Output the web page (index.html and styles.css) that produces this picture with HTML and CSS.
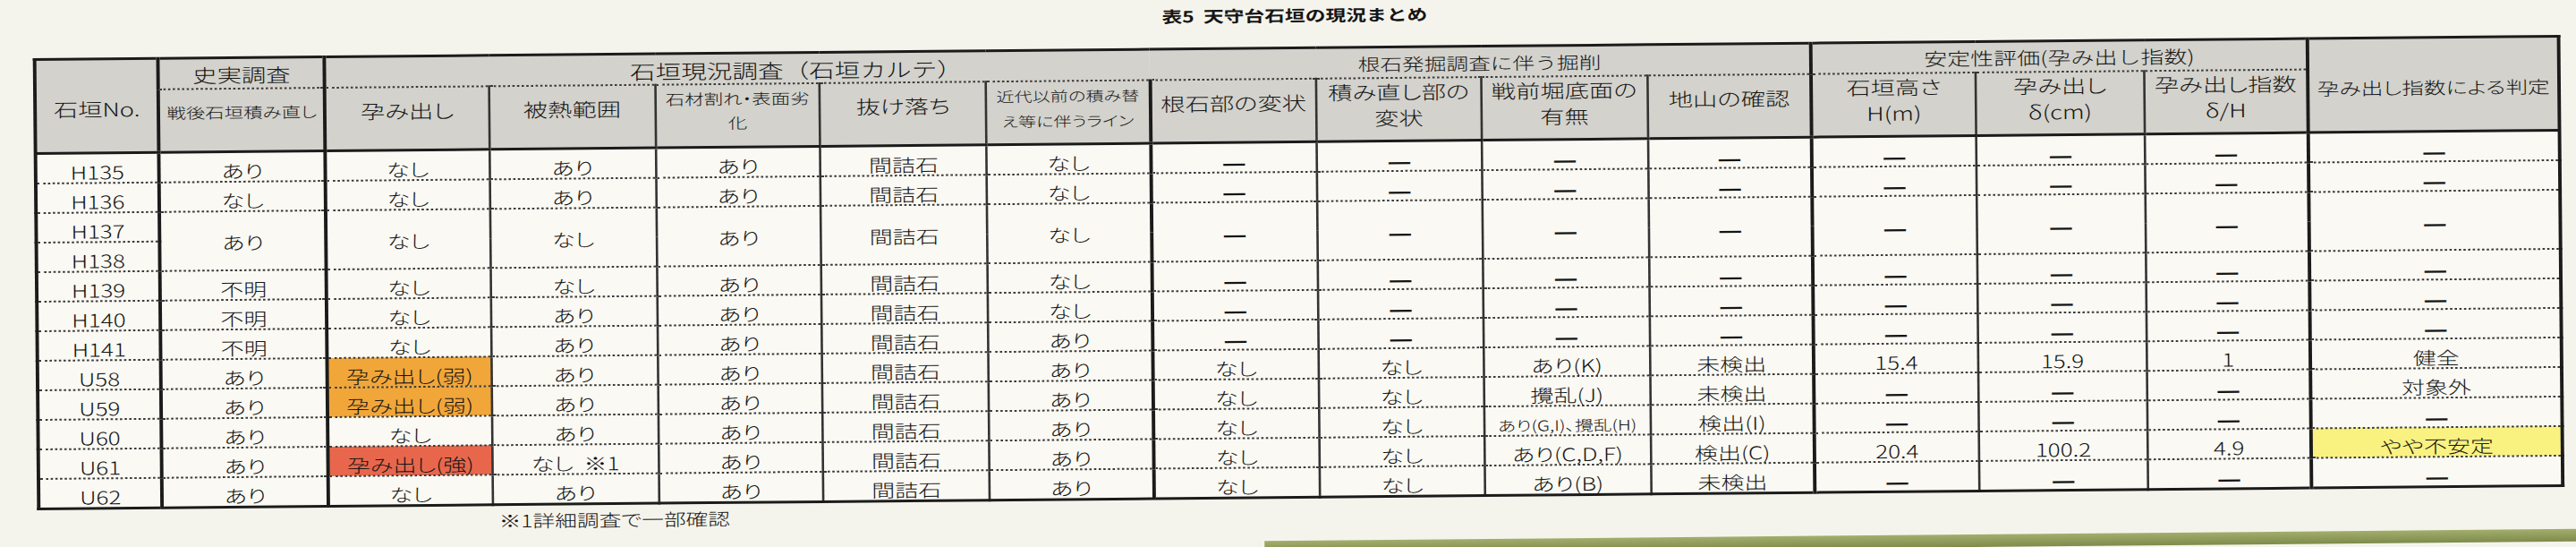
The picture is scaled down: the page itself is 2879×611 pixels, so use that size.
FILE: index.html
```html
<!DOCTYPE html>
<html lang="ja">
<head>
<meta charset="utf-8">
<title>表5 天守台石垣の現況まとめ</title>
<link rel="stylesheet" href="styles.css">
</head>
<body>
<div class="sheet">
  <div class="stretch">
    <div class="title-row"><h1 class="title">表5&nbsp;&nbsp;天守台石垣の現況まとめ</h1></div>
    <table class="summary">
      <colgroup>
        <col class="w-no">
        <col class="w-a">
        <col class="w-b">
        <col class="w-a">
        <col class="w-c">
        <col class="w-a">
        <col class="w-b">
        <col class="w-a">
        <col class="w-c">
        <col class="w-a">
        <col class="w-b">
        <col class="w-c">
        <col class="w-x">
        <col class="w-b">
        <col class="w-j">
      </colgroup>
      <thead>
        <tr class="hr1">
          <th rowspan="2" class="no">石垣No.</th>
          <th class="grp tl">史実調査</th>
          <th colspan="5" class="grp tl open-r shift">石垣現況調査（石垣カルテ）</th>
          <th colspan="4" class="grp open-l g-small">根石発掘調査に伴う掘削</th>
          <th colspan="3" class="grp tl g-mid">安定性評価(孕み出し指数)</th>
          <th rowspan="2" class="judge tl">孕み出し指数による判定</th>
        </tr>
        <tr class="hr2">
          <th class="tl sm">戦後石垣積み直し</th>
          <th class="tl">孕み出し</th>
          <th>被熱範囲</th>
          <th class="sm two">石材割れ・表面劣<br>化</th>
          <th>抜け落ち</th>
          <th class="xs two">近代以前の積み替<br>え等に伴うライン</th>
          <th class="tl">根石部の変状</th>
          <th class="two">積み直し部の<br>変状</th>
          <th class="two">戦前堀底面の<br>有無</th>
          <th>地山の確認</th>
          <th class="tl two">石垣高さ<br>H(m)</th>
          <th class="two">孕み出し<br>δ(cm)</th>
          <th class="two">孕み出し指数<br>δ/H</th>
        </tr>
      </thead>
      <tbody>
        <tr>
          <td>H135</td><td>あり</td><td>なし</td><td>あり</td><td>あり</td><td>間詰石</td><td>なし</td>
          <td class="d">—</td><td class="d">—</td><td class="d">—</td><td class="d">—</td><td class="d">—</td><td class="d">—</td><td class="d">—</td><td class="d">—</td>
        </tr>
        <tr>
          <td>H136</td><td>なし</td><td>なし</td><td>あり</td><td>あり</td><td>間詰石</td><td>なし</td>
          <td class="d">—</td><td class="d">—</td><td class="d">—</td><td class="d">—</td><td class="d">—</td><td class="d">—</td><td class="d">—</td><td class="d">—</td>
        </tr>
        <tr>
          <td>H137</td><td rowspan="2" class="mid">あり</td><td rowspan="2" class="mid">なし</td><td rowspan="2" class="mid">なし</td><td rowspan="2" class="mid">あり</td><td rowspan="2" class="mid">間詰石</td><td rowspan="2" class="mid">なし</td>
          <td rowspan="2" class="d mid">—</td><td rowspan="2" class="d mid">—</td><td rowspan="2" class="d mid">—</td><td rowspan="2" class="d mid">—</td><td rowspan="2" class="d mid">—</td><td rowspan="2" class="d mid">—</td><td rowspan="2" class="d mid">—</td><td rowspan="2" class="d mid">—</td>
        </tr>
        <tr>
          <td>H138</td>
        </tr>
        <tr>
          <td>H139</td><td>不明</td><td>なし</td><td>なし</td><td>あり</td><td>間詰石</td><td>なし</td>
          <td class="d">—</td><td class="d">—</td><td class="d">—</td><td class="d">—</td><td class="d">—</td><td class="d">—</td><td class="d">—</td><td class="d">—</td>
        </tr>
        <tr>
          <td>H140</td><td>不明</td><td>なし</td><td>あり</td><td>あり</td><td>間詰石</td><td>なし</td>
          <td class="d">—</td><td class="d">—</td><td class="d">—</td><td class="d">—</td><td class="d">—</td><td class="d">—</td><td class="d">—</td><td class="d">—</td>
        </tr>
        <tr>
          <td>H141</td><td>不明</td><td>なし</td><td>あり</td><td>あり</td><td>間詰石</td><td>あり</td>
          <td class="d">—</td><td class="d">—</td><td class="d">—</td><td class="d">—</td><td class="d">—</td><td class="d">—</td><td class="d">—</td><td class="d">—</td>
        </tr>
        <tr>
          <td>U58</td><td>あり</td><td class="weak">孕み出し(弱)</td><td>あり</td><td>あり</td><td>間詰石</td><td>あり</td>
          <td>なし</td><td>なし</td><td>あり(K)</td><td>未検出</td><td>15.4</td><td>15.9</td><td>1</td><td>健全</td>
        </tr>
        <tr>
          <td>U59</td><td>あり</td><td class="weak">孕み出し(弱)</td><td>あり</td><td>あり</td><td>間詰石</td><td>あり</td>
          <td>なし</td><td>なし</td><td>攪乱(J)</td><td>未検出</td><td class="d">—</td><td class="d">—</td><td class="d">—</td><td>対象外</td>
        </tr>
        <tr>
          <td>U60</td><td>あり</td><td>なし</td><td>あり</td><td>あり</td><td>間詰石</td><td>あり</td>
          <td>なし</td><td>なし</td><td class="tiny">あり(G,I)、攪乱(H)</td><td>検出(I)</td><td class="d">—</td><td class="d">—</td><td class="d">—</td><td class="d">—</td>
        </tr>
        <tr>
          <td>U61</td><td>あり</td><td class="strong">孕み出し(強)</td><td>なし&nbsp;&nbsp;※1</td><td>あり</td><td>間詰石</td><td>あり</td>
          <td>なし</td><td>なし</td><td>あり(C,D,F)</td><td>検出(C)</td><td>20.4</td><td>100.2</td><td>4.9</td><td class="caution">やや不安定</td>
        </tr>
        <tr>
          <td>U62</td><td>あり</td><td>なし</td><td>あり</td><td>あり</td><td>間詰石</td><td>あり</td>
          <td>なし</td><td>なし</td><td>あり(B)</td><td>未検出</td><td class="d">—</td><td class="d">—</td><td class="d">—</td><td class="d">—</td>
        </tr>
      </tbody>
    </table>
    <p class="note">※1詳細調査で一部確認</p>
    <div class="edge"></div>
  </div>
</div>
</body>
</html>
```

FILE: styles.css
```css
html, body {
  margin: 0;
  padding: 0;
  overflow: hidden;
}

body {
  width: 2879px;
  height: 611px;
  background: #f5f4ec;
  color: #151515;
  font-family: "Noto Sans CJK JP", "Noto Sans", sans-serif;
  font-weight: 300;
  font-feature-settings: "palt";
}

/* the scanned sheet is slightly tilted */
.sheet {
  width: 2879px;
  height: 611px;
  transform: rotate(-0.53deg);
  transform-origin: 1449px 307px;
}

/* the scan is stretched horizontally */
.stretch {
  width: 2215px;
  height: 611px;
  transform: scaleX(1.3);
  transform-origin: 0 0;
}

.title-row {
  margin-left: 30px;
  width: 2170px;
  height: 52px;
  box-sizing: border-box;
  padding-top: 3px;
  text-align: center;
}

.title {
  display: inline-block;
  margin: 0;
  font-size: 17.5px;
  line-height: 28px;
  font-weight: 700;
  font-feature-settings: normal;
}

.summary {
  margin-left: 30px;
  width: 2170px;
  table-layout: fixed;
  border-collapse: collapse;
  border: 3px solid #1b1b1b;
}

.w-no { width: 106.2px; }
.w-a { width: 143.1px; }
.w-b { width: 140.8px; }
.w-c { width: 141.5px; }
.w-x { width: 144.6px; }
.w-j { width: 216.2px; }

.summary th,
.summary td {
  padding: 0;
  text-align: center;
  white-space: nowrap;
  overflow: visible;
  border-left: 2px solid #333;
  border-right: 2px solid #333;
}

.summary th {
  background: #d3d2cc;
  font-weight: 300;
  font-size: 21px;
  line-height: 27px;
  vertical-align: middle;
}

.summary th.tl {
  border-left: 3px solid #1b1b1b;
}

.hr1 th.grp {
  height: 30px;
  padding-top: 2px;
  line-height: 26px;
  font-feature-settings: normal;
  border-bottom: 2px dotted #3a3a3a;
}

.hr1 th.shift {
  font-size: 22px;
  padding-left: 100px;
}

.hr1 th.g-small {
  font-size: 19px;
}

.hr1 th.g-mid {
  font-size: 20px;
}

.hr1 th.open-r { border-right: none; }
.hr1 th.open-l { border-left: none; }

.hr1 th.no,
.hr1 th.judge,
.hr2 th {
  border-bottom: 3px solid #1b1b1b;
}

.hr1 th.no {
  padding-top: 6px;
}

.hr1 th.judge {
  font-size: 19px;
  padding-top: 4px;
}

.hr2 th {
  height: 47px;
  padding-bottom: 18px;
}

.hr2 th.two {
  height: 55px;
  padding-bottom: 10px;
  line-height: 29px;
}

.hr2 th.sm {
  font-size: 16.5px;
}

.hr2 th.two.sm {
  line-height: 27px;
}

.hr2 th.xs {
  font-size: 15.5px;
  line-height: 28px;
}

.summary td {
  height: 31px;
  font-size: 20px;
  line-height: 22px;
  vertical-align: bottom;
  background: #faf9f3;
  border-bottom: 2px dotted #3a3a3a;
}

.summary tbody td:nth-child(2),
.summary tbody td:nth-child(3),
.summary tbody td:nth-child(8),
.summary tbody td:nth-child(12),
.summary tbody td:nth-child(15) {
  border-left: 3px solid #1b1b1b;
}

.summary tbody tr:nth-child(4) td:nth-child(2) {
  border-left: 2px solid #333;
}

.summary td.mid {
  vertical-align: middle;
  padding-top: 4px;
}

.summary td.d {
  font-size: 23px;
  font-weight: 700;
}

.summary td.tiny {
  font-size: 16px;
}

.summary td.weak { background: #f1a63a; }
.summary td.strong { background: #e8674c; }
.summary td.caution { background: #f9f281; }

.note {
  margin: 0 0 0 427px;
  padding-top: 2px;
  font-size: 19px;
  line-height: 28px;
  height: 30px;
  box-sizing: border-box;
}

.edge {
  margin: 17px 0 0 1085px;
  height: 14px;
  background: linear-gradient(#a3ae6d, #7e8b4b);
}
```
